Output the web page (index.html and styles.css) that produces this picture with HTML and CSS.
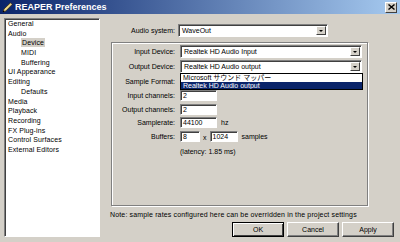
FILE: index.html
```html
<!DOCTYPE html>
<html lang="en">
<head>
  <meta charset="UTF-8">
  <title>REAPER Preferences</title>
  <link rel="stylesheet" href="styles.css">
</head>
<body>
  <div class="window">

    <!-- Titelleiste -->
    <div class="titlebar">
      <svg class="app-icon" viewBox="0 0 11 11">
        <path d="M1 10 L2 7 L8.5 0.8 L10.2 2.5 L3.8 9 Z" fill="#f0dc8c" stroke="#3a2a10" stroke-width="0.8"/>
        <path d="M1 10 L2.2 8.8" stroke="#000" stroke-width="1"/>
      </svg>
      <span>REAPER Preferences</span>
      <div class="close">
        <svg viewBox="0 0 7 6" width="7" height="6">
          <path d="M0.5 0.5 L6.5 5.5 M6.5 0.5 L0.5 5.5" stroke="#000" stroke-width="1.4"/>
        </svg>
      </div>
    </div>

    <div class="frame">
      <!-- Kategorien -->
      <ul class="tree">
        <li>General</li>
        <li>Audio</li>
        <li class="sub"><span class="selected">Device</span></li>
        <li class="sub">MIDI</li>
        <li class="sub">Buffering</li>
        <li>UI Appearance</li>
        <li>Editing</li>
        <li class="sub">Defaults</li>
        <li>Media</li>
        <li>Playback</li>
        <li>Recording</li>
        <li>FX Plug-ins</li>
        <li>Control Surfaces</li>
        <li>External Editors</li>
      </ul>

      <div class="main">
        <div class="system-row">
          <span class="label system-label">Audio system:</span>
          <div class="combo system-combo">
            <span>WaveOut</span>
            <span class="arrow"><i></i></span>
          </div>
        </div>

        <div class="group">
          <div class="row combo-row">
            <span class="label">Input Device:</span>
            <div class="combo device-combo">
              <span>Realtek HD Audio Input</span>
              <span class="arrow"><i></i></span>
            </div>
          </div>

          <div class="row combo-row open">
            <span class="label">Output Device:</span>
            <div class="combo device-combo">
              <span>Realtek HD Audio output</span>
              <span class="arrow"><i></i></span>
            </div>
            <ul class="dropdown">
              <li>Microsoft サウンド マッパー</li>
              <li class="active">Realtek HD Audio output</li>
            </ul>
          </div>

          <div class="row combo-row">
            <span class="label">Sample Format:</span>
          </div>

          <div class="row edit-row">
            <span class="label">Input channels:</span>
            <div class="edit">2</div>
          </div>

          <div class="row edit-row">
            <span class="label">Output channels:</span>
            <div class="edit">2</div>
          </div>

          <div class="row edit-row">
            <span class="label">Samplerate:</span>
            <div class="edit">44100</div>
            <span class="unit">hz</span>
          </div>

          <div class="row edit-row">
            <span class="label">Buffers:</span>
            <div class="edit small">8</div>
            <span class="times">x</span>
            <div class="edit medium">1024</div>
            <span class="unit">samples</span>
          </div>

          <div class="latency">(latency: 1.85 ms)</div>
        </div>

        <p class="note">Note: sample rates configured here can be overridden in the project settings</p>

        <div class="buttons">
          <button class="btn default">OK</button>
          <button class="btn">Cancel</button>
          <button class="btn">Apply</button>
        </div>
      </div>
    </div>

  </div>
</body>
</html>
```

FILE: styles.css
```css
body {
  margin: 0;
  background: #d4d0c8;
  font-family: "Liberation Sans", Arial, sans-serif;
  font-size: 7px;
  color: #000;
}

.window {
  width: 400px;
  height: 242px;
  display: flex;
  flex-direction: column;
  overflow: hidden;
}

/* Titelleiste */
.titlebar {
  height: 14px;
  flex: none;
  display: flex;
  align-items: center;
  padding: 0 3px 0 2px;
  background: linear-gradient(90deg, #0a246a, #a6caf0);
  color: #fff;
  font-weight: bold;
  font-size: 9px;
}

.app-icon {
  width: 11px;
  height: 11px;
  margin-right: 2px;
}

.close {
  margin-left: auto;
  width: 12px;
  height: 11px;
  box-sizing: border-box;
  background: #d4d0c8;
  border: 1px solid;
  border-color: #fff #404040 #404040 #fff;
  display: flex;
  align-items: center;
  justify-content: center;
}

.frame {
  flex: 1;
  display: flex;
  padding: 4px 4px 5px 4px;
  min-height: 0;
}

/* Baum links */
.tree {
  width: 96px;
  flex: none;
  box-sizing: border-box;
  margin: 0;
  padding: 0 0 0 3px;
  list-style: none;
  background: #fff;
  border: 1px solid;
  border-color: #808080 #fff #fff #808080;
  box-shadow: inset 1px 1px #404040;
}

.tree li {
  height: 9.7px;
  line-height: 9.7px;
  white-space: nowrap;
  letter-spacing: 0.1px;
}

.tree li.sub {
  padding-left: 13px;
}

.tree .selected {
  background: #d4d0c8;
  padding: 1px 1px;
}

/* Hauptbereich */
.main {
  flex: 1;
  display: flex;
  flex-direction: column;
  padding-left: 10px;
}

.label {
  flex: none;
  text-align: right;
  white-space: nowrap;
}

.system-row {
  display: flex;
  align-items: center;
  height: 13px;
  margin-top: 6px;
}

.system-label {
  width: 65px;
  margin-right: 3px;
}

.combo {
  height: 13px;
  box-sizing: border-box;
  display: flex;
  align-items: center;
  padding: 1px 1px 1px 3px;
  background: #fff;
  border: 1px solid;
  border-color: #808080 #fff #fff #808080;
  box-shadow: inset 1px 1px #404040;
  white-space: nowrap;
}

.system-combo { width: 150px; }
.device-combo { width: 182px; }

.arrow {
  margin-left: auto;
  width: 10px;
  height: 9px;
  box-sizing: border-box;
  background: #d4d0c8;
  border: 1px solid;
  border-color: #fff #404040 #404040 #fff;
  display: flex;
  align-items: center;
  justify-content: center;
}

.arrow i {
  width: 0;
  height: 0;
  border-left: 2px solid transparent;
  border-right: 2px solid transparent;
  border-top: 2px solid #000;
}

/* Gruppenrahmen */
.group {
  width: 257px;
  height: 164px;
  box-sizing: border-box;
  margin: 5px 0 0 1px;
  padding-top: 2px;
  border: 1px solid #808080;
  box-shadow: inset 1px 1px #fff, 1px 1px #fff;
  display: flex;
  flex-direction: column;
}

.row {
  display: flex;
  align-items: center;
  position: relative;
}

.row .label {
  width: 63px;
  margin-right: 5px;
}

.combo-row {
  height: 13px;
  margin-bottom: 2px;
}

.edit-row {
  height: 11px;
  margin-bottom: 2.7px;
}

.edit {
  width: 37px;
  height: 11px;
  box-sizing: border-box;
  padding: 0 2px;
  line-height: 9px;
  background: #fff;
  border: 1px solid;
  border-color: #808080 #fff #fff #808080;
  box-shadow: inset 1px 1px #404040;
}

.edit.small { width: 20px; }
.edit.medium { width: 28px; }

.unit {
  margin-left: 4px;
}

.times {
  margin: 2px 3px 0 3px;
}

.latency {
  margin: 3px 0 0 68px;
}

/* aufgeklappte Liste */
.dropdown {
  position: absolute;
  top: 13px;
  left: 68px;
  width: 183px;
  height: 17px;
  box-sizing: border-box;
  margin: 0;
  padding: 0;
  list-style: none;
  background: #fff;
  border: 1px solid #000;
  font-family: "Liberation Sans", "Noto Sans CJK JP", sans-serif;
  z-index: 5;
}

.dropdown li {
  height: 7.5px;
  line-height: 7.5px;
  padding-left: 2px;
  white-space: nowrap;
  overflow: hidden;
}

.dropdown li.active {
  background: #0a246a;
  color: #fff;
}

.note {
  margin: 5px 0 0 0;
  white-space: nowrap;
  letter-spacing: 0.15px;
}

.buttons {
  margin-top: auto;
  display: flex;
  justify-content: flex-end;
  gap: 3px;
  padding-right: 2px;
}

.btn {
  width: 52px;
  height: 15px;
  padding: 0;
  font-family: "Liberation Sans", Arial, sans-serif;
  font-size: 7px;
  color: #000;
  background: #d4d0c8;
  border: 1px solid;
  border-color: #fff #404040 #404040 #fff;
  box-shadow: inset -1px -1px #808080;
}

.btn.default {
  border-color: #000;
  box-shadow: inset 1px 1px #fff, inset -1px -1px #404040;
}
```
